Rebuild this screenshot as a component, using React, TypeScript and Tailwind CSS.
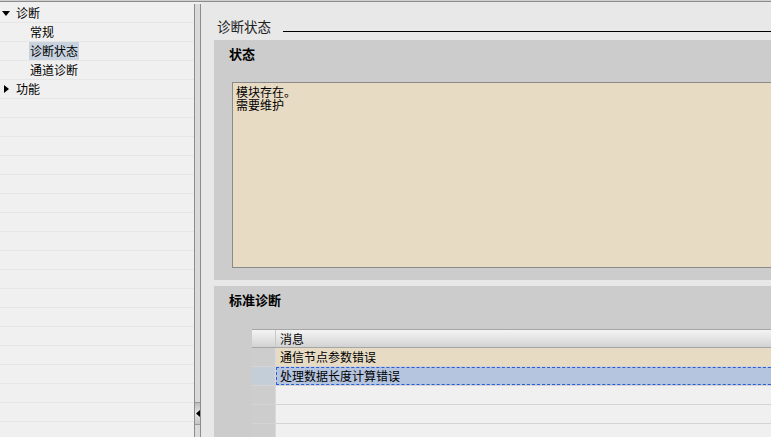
import React from "react";

const font = { fontFamily: '"Noto Sans CJK SC", "Liberation Sans", sans-serif' };

function TreeRow({
  label,
  indent,
  caret,
  selected,
}: {
  label?: string;
  indent?: boolean;
  caret?: "down" | "right";
  selected?: boolean;
}) {
  return (
    <div className="h-[19px] border-b border-[#e6e6e6] flex items-center text-[12px] text-black leading-none">
      {caret === "down" && (
        <svg width="8" height="5" viewBox="0 0 8 5" className="ml-[2px] mr-[5px]">
          <path d="M0 0 H8 L4 5 Z" fill="#000" />
        </svg>
      )}
      {caret === "right" && (
        <svg width="5" height="8" viewBox="0 0 5 8" className="ml-[4px] mr-[6px]">
          <path d="M0 0 V8 L5 4 Z" fill="#000" />
        </svg>
      )}
      {label && (
        <span
          className={`${indent ? "ml-[29px]" : ""} px-[1px] h-[18px] flex items-center ${
            selected ? "bg-[#c8d3df]" : ""
          }`}
        >
          {label}
        </span>
      )}
    </div>
  );
}

function TableRow({
  text,
  kind,
}: {
  text?: string;
  kind: "tan" | "selected" | "empty";
}) {
  const head = kind === "selected" ? "bg-[#c3ced9]" : "bg-[#cdcdcd]";
  const cell =
    kind === "tan"
      ? "bg-[#e8dbc4]"
      : kind === "selected"
      ? "bg-[#b5c4df] outline outline-1 outline-dashed outline-[#2a5bd7] -outline-offset-1"
      : "bg-[#f0f0f0]";
  return (
    <div className="flex h-[19px] border-b border-[#d4d4d4]">
      <div className={`w-[24px] shrink-0 border-r border-[#dadada] ${head}`} />
      <div className={`flex-1 flex items-center pl-[4px] text-[12px] leading-none ${cell}`}>
        {text}
      </div>
    </div>
  );
}

export default function App() {
  return (
    <div className="w-[771px] h-[437px] overflow-hidden bg-[#e8e8e8] flex flex-col" style={font}>
      <div className="h-[2px] shrink-0 border-b border-[#8c8c8c] bg-[#d0d0d0]" />
      <div className="flex flex-1 min-h-0">
        {/* tree */}
        <div className="w-[194px] shrink-0 bg-[#f0f0f0] pt-[2px]">
          <TreeRow caret="down" label="诊断" />
          <TreeRow indent label="常规" />
          <TreeRow indent label="诊断状态" selected />
          <TreeRow indent label="通道诊断" />
          <TreeRow caret="right" label="功能" />
          {Array.from({ length: 17 }).map((_, i) => (
            <TreeRow key={i} />
          ))}
        </div>

        {/* splitter */}
        <div className="w-[7px] shrink-0 bg-[#f0f0f0] pt-[2px] flex flex-col">
          <div className="flex-1 border-x border-[#8c8c8c] bg-[#dadada] flex flex-col justify-end">
            <div className="h-[23px] mb-[12px] border-y border-[#9a9a9a] bg-gradient-to-b from-[#bdbdbd] via-[#e6e6e6] to-[#c4c4c4] flex items-center justify-center">
              <svg width="4" height="7" viewBox="0 0 4 7">
                <path d="M4 0 V7 L0 3.5 Z" fill="#000" />
              </svg>
            </div>
          </div>
        </div>

        {/* content, runs past the right edge */}
        <div className="w-[600px] shrink-0 pl-[13px] flex flex-col">
          <div className="h-[38px] shrink-0 flex items-end pb-[7px]">
            <span className="text-[13.5px] leading-none text-[#222] ml-[3px] mr-[12px]">诊断状态</span>
            <div className="flex-1 h-px bg-black mb-[1px]" />
          </div>

          <div className="h-[240px] shrink-0 bg-[#cccccc] pt-[6px] flex flex-col">
            <div className="text-[13px] font-bold leading-none pl-[15px] h-[36px] pt-[1px]">状态</div>
            <div className="ml-[18px] h-[186px] border border-[#8a8a8a] bg-[#e8dbc4] px-[3px] pt-[2px] text-[12px] leading-[13px]">
              <div>模块存在。</div>
              <div>需要维护</div>
            </div>
          </div>

          <div className="h-[6px] shrink-0" />

          <div className="flex-1 bg-[#cccccc] pt-[7px] flex flex-col">
            <div className="text-[13px] font-bold leading-none pl-[15px] h-[36px]">标准诊断</div>
            <div className="ml-[38px] flex flex-col">
              <div className="flex h-[19px] border-y border-[#a6a6a6] bg-gradient-to-b from-[#f4f4f4] via-[#e4e4e4] to-[#d2d2d2]">
                <div className="w-[24px] shrink-0 border-r border-[#c8c8c8]" />
                <div className="flex-1 flex items-center pl-[4px] text-[12px] leading-none">消息</div>
              </div>
              <TableRow text="通信节点参数错误" kind="tan" />
              <TableRow text="处理数据长度计算错误" kind="selected" />
              <TableRow kind="empty" />
              <TableRow kind="empty" />
              <TableRow kind="empty" />
            </div>
          </div>
        </div>
      </div>
    </div>
  );
}
